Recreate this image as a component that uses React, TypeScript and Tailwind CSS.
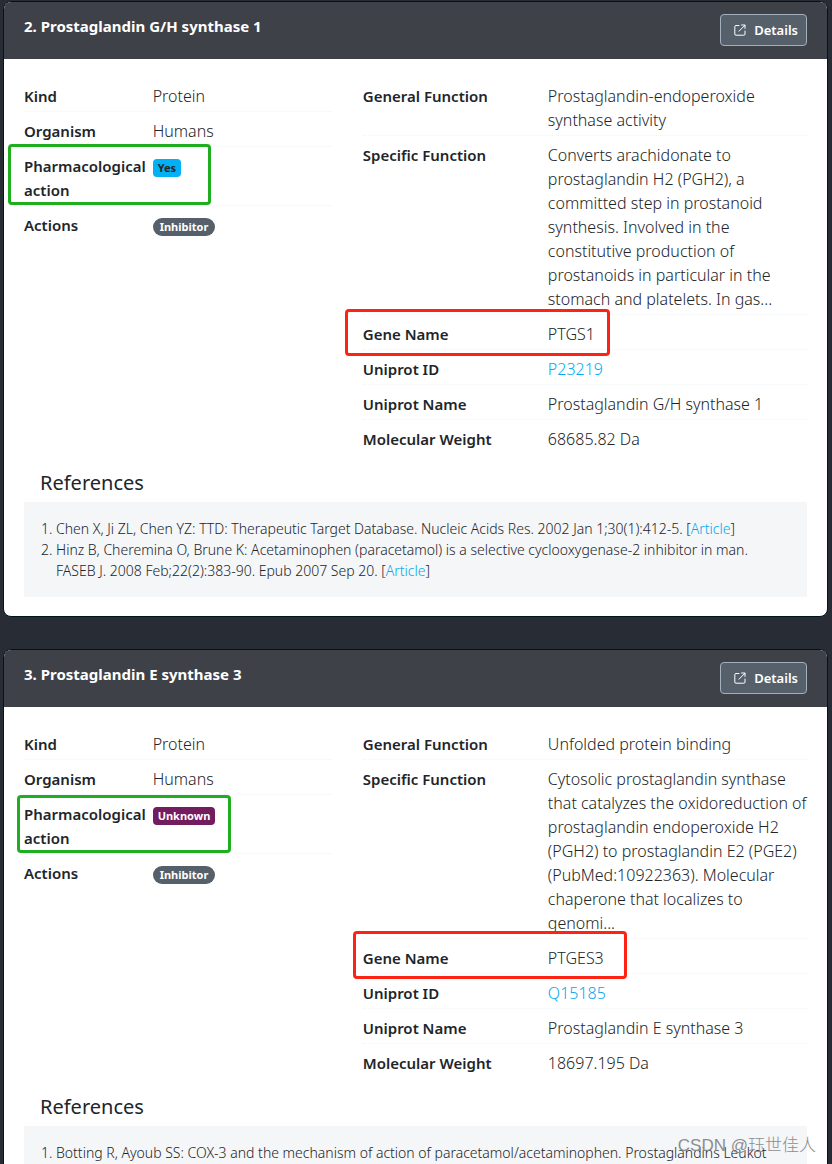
import clsx from "clsx";
import type { ReactNode } from "react";

type Citation = { text: string; link?: boolean };

type Target = {
  id: number;
  name: string;
  kind: string;
  organism: string;
  action: "Yes" | "Unknown";
  effect: string;
  generalFunction: string;
  specificFunction: string;
  gene: string;
  uniprotId: string;
  weight: string;
  actionMark: string;
  geneMark: string;
  citations: Citation[];
};

const targets: Target[] = [
  {
    id: 2,
    name: "Prostaglandin G/H synthase 1",
    kind: "Protein",
    organism: "Humans",
    action: "Yes",
    effect: "Inhibitor",
    generalFunction: "Prostaglandin-endoperoxide synthase activity",
    specificFunction:
      "Converts arachidonate to prostaglandin H2 (PGH2), a committed step in prostanoid synthesis. Involved in the constitutive production of prostanoids in particular in the stomach and platelets. In gas...",
    gene: "PTGS1",
    uniprotId: "P23219",
    weight: "68685.82 Da",
    actionMark: "-left-4 -top-[10px] h-[61px] w-[203px]",
    geneMark: "-left-[18px] -top-[13px] h-[47px] w-[265px]",
    citations: [
      {
        text: "Chen X, Ji ZL, Chen YZ: TTD: Therapeutic Target Database. Nucleic Acids Res. 2002 Jan 1;30(1):412-5.",
        link: true,
      },
      {
        text: "Hinz B, Cheremina O, Brune K: Acetaminophen (paracetamol) is a selective cyclooxygenase-2 inhibitor in man. FASEB J. 2008 Feb;22(2):383-90. Epub 2007 Sep 20.",
        link: true,
      },
    ],
  },
  {
    id: 3,
    name: "Prostaglandin E synthase 3",
    kind: "Protein",
    organism: "Humans",
    action: "Unknown",
    effect: "Inhibitor",
    generalFunction: "Unfolded protein binding",
    specificFunction:
      "Cytosolic prostaglandin synthase that catalyzes the oxidoreduction of prostaglandin endoperoxide H2 (PGH2) to prostaglandin E2 (PGE2) (PubMed:10922363). Molecular chaperone that localizes to genomi...",
    gene: "PTGES3",
    uniprotId: "Q15185",
    weight: "18697.195 Da",
    actionMark: "-left-[7px] -top-[7px] h-[58px] w-[214px]",
    geneMark: "-left-[10px] -top-[15px] h-12 w-[274px]",
    citations: [
      {
        text: "Botting R, Ayoub SS: COX-3 and the mechanism of action of paracetamol/acetaminophen. Prostaglandins Leukot",
      },
    ],
  },
];

function DetailsIcon() {
  return (
    <svg viewBox="0 0 12 12" className="size-3" fill="none" stroke="currentColor" strokeLinecap="round" strokeLinejoin="round">
      <path d="M5 1.5H2a1.2 1.2 0 0 0-1.2 1.2V10A1.2 1.2 0 0 0 2 11.2h7.8A1.2 1.2 0 0 0 11 10V7" />
      <path d="M5 7.2 11 1.2M7.6 1H11v3.4" />
    </svg>
  );
}

function Row({ label, children, mark }: { label: string; children: ReactNode; mark?: string }) {
  return (
    <div className="relative flex border-b border-dotted border-gray-100 pb-[3px] last:border-transparent">
      <dt className="w-5/12 shrink-0 text-[15px] font-semibold">{label}</dt>
      <dd className="min-w-0 flex-1 font-light">{children}</dd>
      {mark && <span aria-hidden="true" className={clsx("pointer-events-none absolute rounded-sm border-3", mark)} />}
    </div>
  );
}

function TargetCard({ target }: { target: Target }) {
  return (
    <section className="overflow-hidden rounded-lg border border-[#02151c] bg-white">
      <header className="flex min-h-[57px] items-start justify-between bg-[#3f4149] px-5 py-3">
        <h2 className="text-[15px] leading-6 font-bold text-white">
          {target.id}. {target.name}
        </h2>
        <button
          type="button"
          className="flex h-8 items-center gap-2 rounded-sm border border-[#a3b1bf] bg-[#55606b] pr-2 pl-[13px] text-[13px] font-semibold text-white"
        >
          <DetailsIcon />
          Details
        </button>
      </header>

      <div className="px-5 pt-[25px] pb-[19px]">
        <div className="-mx-[15px] flex">
          <dl className="flex w-5/12 flex-col gap-[7px] px-[15px]">
            <Row label="Kind">{target.kind}</Row>
            <Row label="Organism">{target.organism}</Row>
            <Row label="Pharmacological action" mark={clsx("border-[#1fae1f]", target.actionMark)}>
              <span
                className={clsx(
                  "inline-block rounded-sm px-[5px] text-[11px] leading-[18px] font-bold",
                  target.action === "Yes" ? "bg-[#02b0f5] text-[#212529]" : "bg-[#731c5e] text-white"
                )}
              >
                {target.action}
              </span>
            </Row>
            <Row label="Actions">
              <span className="inline-block rounded-full bg-[#55606b] px-[7px] text-[11px] leading-[18px] font-bold text-white">
                {target.effect}
              </span>
            </Row>
          </dl>
          <dl className="flex w-7/12 flex-col gap-[7px] px-[15px]">
            <Row label="General Function">{target.generalFunction}</Row>
            <Row label="Specific Function">{target.specificFunction}</Row>
            <Row label="Gene Name" mark={clsx("border-[#fd2314]", target.geneMark)}>
              {target.gene}
            </Row>
            <Row label="Uniprot ID">
              <a href="#" className="text-[#02a9ed]">
                {target.uniprotId}
              </a>
            </Row>
            <Row label="Uniprot Name">{target.name}</Row>
            <Row label="Molecular Weight">{target.weight}</Row>
          </dl>
        </div>

        <h3 className="mt-4 px-4 pb-[7px] text-[20px] leading-6">References</h3>
        <ol className="list-decimal bg-[#f5f6f8] py-4 pr-4 pl-8 text-[14px] leading-[21px] font-light">
          {target.citations.map((citation) => (
            <li key={citation.text}>
              {citation.text}
              {citation.link && (
                <>
                  {" ["}
                  <a href="#" className="text-[#02a9ed]">
                    Article
                  </a>
                  {"]"}
                </>
              )}
            </li>
          ))}
        </ol>
      </div>
    </section>
  );
}

export default function App() {
  return (
    <main className="relative h-screen overflow-hidden bg-[#282c34] pt-px pr-1 pl-[3px] font-['Noto_Sans','Noto_Sans_CJK_SC',sans-serif] text-[16px] leading-6 text-[#212529]">
      <div className="flex flex-col gap-8">
        {targets.map((target) => (
          <TargetCard key={target.id} target={target} />
        ))}
      </div>
      <p className="absolute right-4 bottom-1 font-['Liberation_Sans','Noto_Sans_CJK_SC',sans-serif] text-[17px] leading-7 font-light text-[#8c8d90]">
        CSDN @珏世佳人
      </p>
    </main>
  );
}
